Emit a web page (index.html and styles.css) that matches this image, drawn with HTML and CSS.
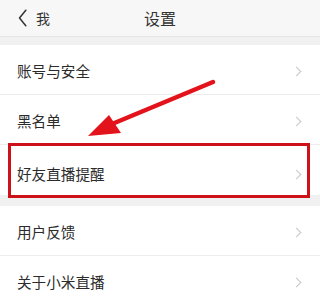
FILE: index.html
```html
<!DOCTYPE html>
<html lang="zh-CN">
<head>
<meta charset="utf-8">
<title>设置</title>
<link rel="stylesheet" href="styles.css">
</head>
<body>
<div class="screen">
  <header class="topbar">
    <div class="back">
      <svg class="back-icon" width="9" height="18" viewBox="0 0 9 18"><path d="M7.8 1.2 L1.5 9 L7.8 16.8" fill="none" stroke="#333" stroke-width="1.5" stroke-linecap="round" stroke-linejoin="round"/></svg>
      <span class="back-text">我</span>
    </div>
    <div class="title">设置</div>
  </header>
  <div class="band"></div>
  <ul class="group">
    <li class="row"><span class="label">账号与安全</span><span class="chev"></span></li>
    <li class="row"><span class="label">黑名单</span><span class="chev"></span></li>
    <li class="row tall"><span class="label">好友直播提醒</span><span class="chev"></span></li>
  </ul>
  <div class="band small"></div>
  <ul class="group">
    <li class="row"><span class="label">用户反馈</span><span class="chev"></span></li>
    <li class="row"><span class="label">关于小米直播</span><span class="chev"></span></li>
  </ul>

  <div class="highlight"></div>
  <svg class="arrow" width="320" height="301" viewBox="0 0 320 301">
    <line x1="213" y1="82" x2="112" y2="124" stroke="#e3131b" stroke-width="4.5" stroke-linecap="round"/>
    <polygon points="88,136 109,115 121,133" fill="#e3131b"/>
  </svg>
</div>
</body>
</html>
```

FILE: styles.css
```css
* { box-sizing: border-box; }
html, body { margin: 0; padding: 0; background: #ffffff; }
body {
  font-family: "Noto Sans CJK SC", "Noto Sans", sans-serif;
  color: #2b2b2b;
}
.screen {
  position: relative;
  width: 320px;
  height: 301px;
  overflow: hidden;
  background: #ffffff;
}
.topbar {
  position: relative;
  height: 37px;
  background: #f7f7f7;
  border-bottom: 1px solid #e6e6e6;
  display: flex;
  align-items: center;
  justify-content: center;
}
.back {
  position: absolute;
  left: 18px;
  top: 0;
  height: 36px;
  display: flex;
  align-items: center;
  gap: 9px;
}
.back-icon { display: block; }
.back-text { font-size: 14px; color: #333; line-height: 1; }
.title { font-size: 16px; color: #333; line-height: 1; }
.band { height: 8px; background: #f1f1f1; }
.band.small { height: 11px; }
.group { list-style: none; margin: 0; padding: 0; }
.row {
  height: 50px;
  display: flex;
  align-items: center;
  justify-content: space-between;
  padding: 3px 20px 0 17px;
  border-bottom: 1px solid #ededed;
}
.row.tall { padding-top: 8px; }
.row:last-child { border-bottom: none; }
.label { font-size: 14.6px; color: #2b2b2b; line-height: 1; }
.chev {
  width: 7px;
  height: 7px;
  border-top: 1.3px solid #c6c6c6;
  border-right: 1.3px solid #c6c6c6;
  transform: rotate(45deg);
}
.highlight {
  position: absolute;
  left: 8px;
  top: 143px;
  width: 302px;
  height: 55px;
  border: 3px solid #cc1119;
}
.arrow { position: absolute; left: 0; top: 0; }
```
